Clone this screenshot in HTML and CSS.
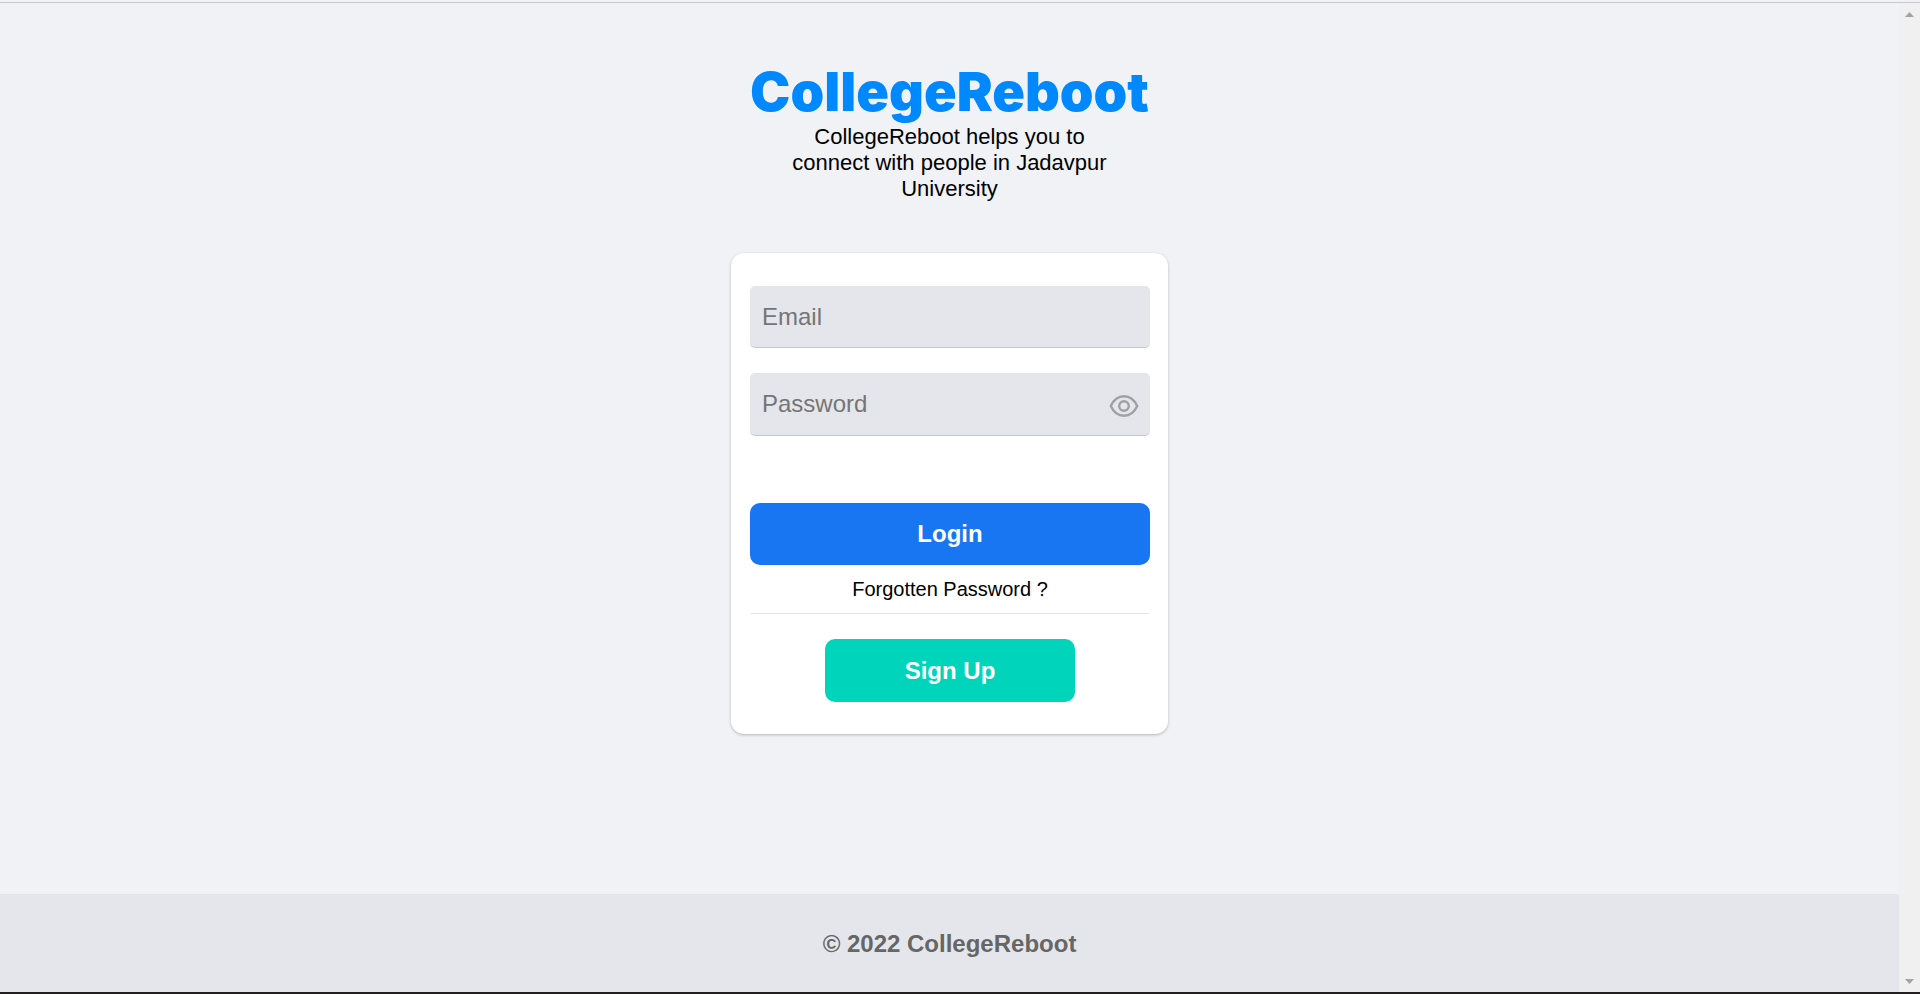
FILE: index.html
```html
<!DOCTYPE html>
<html lang="en">
<head>
<meta charset="utf-8">
<title>CollegeReboot</title>
<link rel="stylesheet" href="styles.css">
</head>
<body>
<div class="window">
  <div class="page">
    <main class="main">
      <header class="intro">
        <h1 class="brand">CollegeReboot</h1>
        <p class="tagline">CollegeReboot helps you to connect with people in Jadavpur University</p>
      </header>
      <form class="card">
        <input class="field" type="email" placeholder="Email" aria-label="Email">
        <div class="password">
          <input class="field" type="password" placeholder="Password" aria-label="Password">
          <button class="reveal" type="button" aria-label="Show password">
            <svg class="eye" viewBox="0 0 30 24" fill="none" stroke="currentColor" stroke-width="2.400">
              <path d="M1.800 12C4.500 6 9 2.200 15 2.200S25.500 6 28.200 12C25.500 18 21 21.800 15 21.800S4.500 18 1.800 12Z" stroke-linejoin="round"/>
              <circle cx="15" cy="12" r="4.800"/>
            </svg>
          </button>
        </div>
        <button class="button login" type="submit">Login</button>
        <a class="forgot" href="#">Forgotten Password ?</a>
        <hr class="rule">
        <button class="button signup" type="button">Sign Up</button>
      </form>
    </main>
    <footer class="footer">© 2022 CollegeReboot</footer>
  </div>
  <div class="scrollbar" aria-hidden="true">
    <svg class="arrow" viewBox="0 0 9 5"><path d="M0 5L4.500 0L9 5Z"/></svg>
    <svg class="arrow" viewBox="0 0 9 5"><path d="M0 0L4.500 5L9 0Z"/></svg>
  </div>
</div>
</body>
</html>
```
FILE: styles.css
```css
* { box-sizing: border-box; margin: 0; }
body {
  display: flex;
  flex-direction: column;
  min-height: 100vh;
  padding-top: 2px;
  font-family: "Liberation Sans", Arial, sans-serif;
  color: #000;
  background: #f0f2f5;
}
.window {
  flex: 1;
  display: flex;
  border-top: 1px solid #c8c8c8;
  border-bottom: 2px solid #231f20;
}
.page { flex: 1; display: flex; flex-direction: column; }
.main {
  flex: 1;
  display: flex;
  flex-direction: column;
  align-items: center;
  padding-top: 59px;
}
.intro { text-align: center; margin-bottom: 51px; }
.brand {
  font-family: "Arial Black", Inter, sans-serif;
  font-size: 54px;
  font-weight: 900;
  line-height: 60px;
  margin-bottom: 2px;
  color: #0088ff;
}
.tagline {
  max-width: 340px;
  margin: 0 auto;
  font-size: 22px;
  line-height: 26px;
}
.card {
  display: flex;
  flex-direction: column;
  align-items: center;
  width: 437px;
  max-width: 100%;
  padding: 33px 18px 32px 19px;
  background: #fff;
  border-radius: 13px;
  box-shadow: 0 1px 3px rgba(0, 0, 0, 0.25);
}
.field {
  display: block;
  width: 100%;
  height: 62px;
  padding: 0 12px;
  border: 0;
  border-bottom: 1px solid #c8c8cb;
  border-radius: 5px;
  background: #e4e6eb;
  font: 24px "Liberation Sans", Arial, sans-serif;
}
.field::placeholder { color: #757575; }
.password { position: relative; width: 100%; margin: 25px 0 67px; }
.password .field { height: 63px; }
.reveal {
  position: absolute;
  right: 11px;
  top: 21px;
  display: flex;
  padding: 0;
  border: 0;
  background: none;
  color: #9fa0a4;
}
.eye { width: 30px; height: 24px; }
.button {
  height: 62px;
  border: 0;
  border-radius: 10px;
  color: #fff;
  font: bold 24px "Liberation Sans", Arial, sans-serif;
}
.login { width: 100%; background: #1976f2; }
.forgot {
  margin: 12px 0;
  font-size: 20px;
  line-height: 24px;
  color: inherit;
  text-decoration: none;
}
.rule { width: 398px; max-width: 100%; border: 0; border-top: 1px solid #e4e4e8; }
.signup { width: 250px; height: 63px; margin-top: 25px; background: #00d4ba; }
.footer {
  padding: 36px 0 34px;
  background: #e4e6eb;
  color: #666;
  font-size: 24px;
  line-height: 28px;
  font-weight: bold;
  text-align: center;
}
.scrollbar {
  display: flex;
  flex-direction: column;
  justify-content: space-between;
  align-items: center;
  width: 21px;
  padding: 9px 0 8px;
  background: #f0f0f0;
}
.arrow { width: 9px; height: 5px; fill: #a3a3a3; }
```
